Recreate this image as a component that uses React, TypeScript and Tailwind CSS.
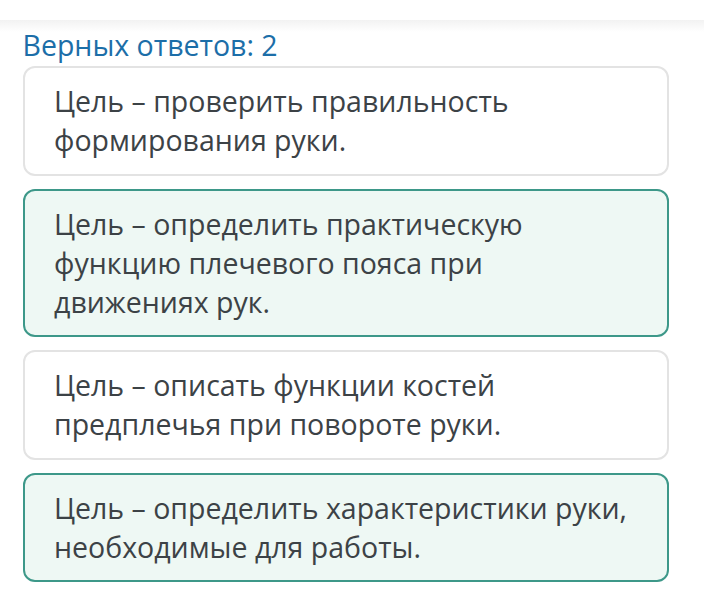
import React from "react";

const items = [
  { text: "Цель – проверить правильность формирования руки.", ok: false },
  { text: "Цель – определить практическую функцию плечевого пояса при движениях рук.", ok: true },
  { text: "Цель – описать функции костей предплечья при повороте руки.", ok: false },
  { text: "Цель – определить характеристики руки, необходимые для работы.", ok: true },
];

export default function App() {
  return (
    <div className="w-[704px] h-[616px] bg-white overflow-hidden" style={{ fontFamily: '"Open Sans", sans-serif' }}>
      <div className="h-[20px] bg-white" />
      <div className="h-[12px] bg-gradient-to-b from-[#f2f2f2] to-white" />
      <div className="pl-[22.5px] pr-[35px]">
        <div className="text-[28.5px] leading-[28px] text-[#1c6ea8] -mt-[1px]">Верных ответов: 2</div>
        <div className="mt-[7px] flex flex-col gap-[13px]">
          {items.map((it, i) => (
            <div
              key={i}
              className={
                it.ok
                  ? "rounded-[12px] border-2 border-[#3d9889] bg-[#eef8f4] pl-[29.5px] pr-[33px] pt-[14px] pb-[13.5px] text-[28.5px] leading-[39px] text-[#3c4246]"
                  : "rounded-[12px] border-2 border-[#e3e3e3] bg-white pl-[29.5px] pr-[33px] pt-[14px] pb-[13.5px] text-[28.5px] leading-[39px] text-[#3c4246]"
              }
            >
              {it.text}
            </div>
          ))}
        </div>
      </div>
    </div>
  );
}
